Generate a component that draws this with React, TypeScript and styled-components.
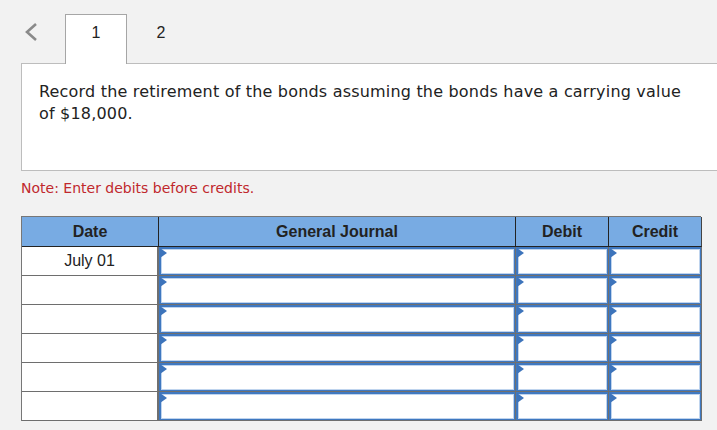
import React from 'react'
import styled, { createGlobalStyle } from 'styled-components'

const GlobalStyle = createGlobalStyle`
  body {
    margin: 0;
    background: #f2f2f2;
    overflow: hidden;
  }
`

const Page = styled.div`
  width: 717px;
  height: 430px;
  overflow: hidden;
  background: #f2f2f2;
`

const TabBar = styled.div`
  display: flex;
  align-items: flex-end;
  height: 63px;
  padding-left: 23px;
  box-sizing: border-box;
`

const Back = styled.button`
  border: 0;
  background: none;
  padding: 0;
  width: 18px;
  height: 20px;
  margin: 0 24px 21px 0;
  cursor: pointer;
`

const Tab = styled.div<{ $active?: boolean }>`
  position: relative;
  z-index: 1;
  width: ${(p) => (p.$active ? '62px' : '68px')};
  height: ${(p) => (p.$active ? '50px' : '49px')};
  box-sizing: border-box;
  margin-bottom: ${(p) => (p.$active ? '-1px' : '0')};
  border: ${(p) => (p.$active ? '1px solid #a6a6a6' : '1px solid transparent')};
  border-bottom: 0;
  background: ${(p) => (p.$active ? '#fff' : 'transparent')};
  display: flex;
  justify-content: center;
  padding-top: 9px;
  font-family: Arial, 'Liberation Sans', sans-serif;
  font-size: 16px;
  color: #222;
`

const Question = styled.div`
  margin-left: 21px;
  width: 720px;
  height: 108px;
  box-sizing: border-box;
  background: #fff;
  border: 1px solid #bdbdbd;
  padding: 17px 46px 0 17px;
  font-family: 'DejaVu Sans', Verdana, sans-serif;
  font-size: 16px;
  letter-spacing: 0.19px;
  line-height: 22px;
  color: #222;
`

const Note = styled.div`
  margin: 9px 0 0 21px;
  font-family: 'DejaVu Sans', Verdana, sans-serif;
  font-size: 14px;
  line-height: 16px;
  color: #c0282d;
`

const Journal = styled.div`
  margin: 20px 0 0 21px;
  width: 680px;
  display: grid;
  grid-template-columns: 137px 357px 93px 93px;
  grid-template-rows: 30px;
  grid-auto-rows: 29px;
  border-left: 1px solid #777;
  border-top: 1px solid #777;
  box-sizing: border-box;
  font-family: Arial, 'Liberation Sans', sans-serif;
`

const Head = styled.div<{ $last?: boolean }>`
  background: #78abe3;
  border-bottom: 1px solid #232323;
  border-right: 1px solid ${(p) => (p.$last ? '#444' : '#232323')};
  display: flex;
  align-items: center;
  justify-content: center;
  font-size: 16px;
  font-weight: bold;
  color: #222;
`

const DateCell = styled.div`
  background: #fff;
  border-bottom: 1px solid #6e6e6e;
  border-right: 2px solid #6f6f6f;
  display: flex;
  align-items: center;
  justify-content: center;
  font-size: 16px;
  color: #222;
`

const EntryCell = styled.div`
  position: relative;
  border-bottom: 1px solid #6f6f6f;
  border-right: 1px solid #6f6f6f;
  display: flex;
`

const Entry = styled.input`
  flex: 1;
  min-width: 0;
  margin: 0;
  padding: 0 6px;
  border: solid #3f78c0;
  border-width: 2px 1px 1px 2px;
  box-shadow: inset 0 0 0 1px #bfd4ee;
  background: #fff;
  outline: none;
  font-family: Arial, 'Liberation Sans', sans-serif;
  font-size: 14px;
`

const Marker = styled.span`
  position: absolute;
  left: 1px;
  top: 1px;
  width: 0;
  height: 0;
  border-top: 5px solid transparent;
  border-bottom: 5px solid transparent;
  border-left: 7px solid #3d74bb;
  pointer-events: none;
`

const rows = ['July 01', '', '', '', '', '']

function Field() {
  return (
    <EntryCell>
      <Entry type="text" />
      <Marker />
    </EntryCell>
  )
}

export default function App() {
  return (
    <Page>
      <GlobalStyle />
      <TabBar>
        <Back aria-label="previous">
          <svg width="16" height="20" viewBox="0 0 16 20">
            <path d="M12 2 L3 10 L12 18" fill="none" stroke="#8a8a8a" strokeWidth="2.6" />
          </svg>
        </Back>
        <Tab $active>1</Tab>
        <Tab>2</Tab>
      </TabBar>
      <Question>
        Record the retirement of the bonds assuming the bonds have a carrying value
        of $18,000.
      </Question>
      <Note>Note: Enter debits before credits.</Note>
      <Journal>
        <Head>Date</Head>
        <Head>General Journal</Head>
        <Head>Debit</Head>
        <Head $last>Credit</Head>
        {rows.map((d, i) => (
          <React.Fragment key={i}>
            <DateCell>{d}</DateCell>
            <Field />
            <Field />
            <Field />
          </React.Fragment>
        ))}
      </Journal>
    </Page>
  )
}
